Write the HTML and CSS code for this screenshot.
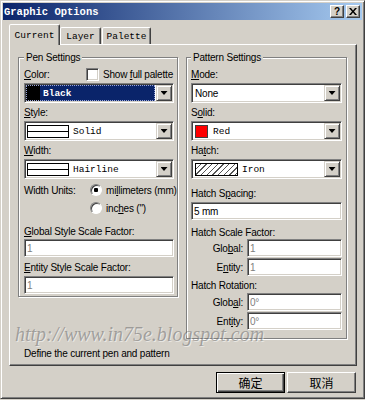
FILE: index.html
```html
<!DOCTYPE html>
<html lang="en">
<head>
  <meta charset="UTF-8">
  <meta name="viewport" content="width=device-width, initial-scale=1.0">
  <title>Graphic Options</title>
  <link rel="stylesheet" href="styles.css">
</head>
<body>
  <div class="window">
    <div class="titlebar">
      <span class="title">Graphic Options</span>
      <span class="cap-btns">
        <span class="cap-btn">?</span>
        <span class="cap-btn">
          <svg width="8" height="7" viewBox="0 0 8 7"><path d="M0 0h2l2 2.5L6 0h2L5 3.5 8 7H6L4 4.5 2 7H0l3-3.5z" fill="#000"/></svg>
        </span>
      </span>
    </div>

    <div class="tabs">
      <div class="tab active">Current</div>
      <div class="tab tab-layer">Layer</div>
      <div class="tab tab-palette">Palette</div>
    </div>

    <div class="panel">
      <div class="groups">
        <!-- Pen Settings -->
        <div class="group pen">
          <div class="group-title">Pen Settings</div>
          <div class="color-row">
            <span class="color-label"><u>C</u>olor:</span>
            <span class="check"></span>
            <span>Show <u>f</u>ull palette</span>
          </div>
          <div class="select first">
            <div class="value hl"><span class="swatch-black"></span><span class="mono bold">Black</span></div>
            <div class="drop"><span class="arrow"></span></div>
          </div>
          <div class="lbl"><u>S</u>tyle:</div>
          <div class="select">
            <div class="value"><span class="line-box"></span><span class="mono">Solid</span></div>
            <div class="drop"><span class="arrow"></span></div>
          </div>
          <div class="lbl"><u>W</u>idth:</div>
          <div class="select">
            <div class="value"><span class="line-box"></span><span class="mono">Hairline</span></div>
            <div class="drop"><span class="arrow"></span></div>
          </div>
          <div class="units">
            <span>Width Units:</span>
            <span class="radio on"></span>
            <span>mi<u>l</u>limeters (mm)</span>
            <span></span>
            <span class="radio"></span>
            <span>inc<u>h</u>es (")</span>
          </div>
          <div class="lbl lbl-far"><u>G</u>lobal Style Scale Factor:</div>
          <div class="input dim">1</div>
          <div class="lbl lbl-mid"><u>E</u>ntity Style Scale Factor:</div>
          <div class="input dim">1</div>
        </div>

        <!-- Pattern Settings -->
        <div class="group pattern">
          <div class="group-title">Pattern Settings</div>
          <div class="lbl lbl-first"><u>M</u>ode:</div>
          <div class="select">
            <div class="value"><span class="plain">None</span></div>
            <div class="drop"><span class="arrow"></span></div>
          </div>
          <div class="lbl">S<u>o</u>lid:</div>
          <div class="select">
            <div class="value"><span class="swatch-red"></span><span class="mono">Red</span></div>
            <div class="drop"><span class="arrow"></span></div>
          </div>
          <div class="lbl">Ha<u>t</u>ch:</div>
          <div class="select">
            <div class="value"><span class="hatch-box"></span><span class="mono">Iron</span></div>
            <div class="drop"><span class="arrow"></span></div>
          </div>
          <div class="lbl lbl-far">Hatch S<u>p</u>acing:</div>
          <div class="input">5 mm</div>
          <div class="lbl lbl-scale">Hatch Scale Factor:</div>
          <div class="pair">
            <span class="pair-label">Glo<u>b</u>al:</span>
            <div class="input dim">1</div>
          </div>
          <div class="pair pair-next">
            <span class="pair-label">E<u>n</u>tity:</span>
            <div class="input dim">1</div>
          </div>
          <div class="lbl lbl-rot">Hatch Rotation:</div>
          <div class="pair">
            <span class="pair-label">Glob<u>a</u>l:</span>
            <div class="input dim">0°</div>
          </div>
          <div class="pair pair-next">
            <span class="pair-label">Ent<u>i</u>ty:</span>
            <div class="input dim">0°</div>
          </div>
        </div>
      </div>
      <div class="status">Define the current pen and pattern</div>
    </div>

    <div class="actions">
      <div class="btn default">确定</div>
      <div class="btn">取消</div>
    </div>

    <div class="watermark">http://www.in75e.blogspot.com</div>
  </div>
</body>
</html>
```

FILE: styles.css
```css
body {
  margin: 0;
  font-family: "Liberation Sans", Arial, sans-serif;
  font-size: 10px;
  letter-spacing: -0.2px;
  color: #000;
  background-color: #d4d0c8;
}

/* Window frame */
.window {
  position: relative;
  width: 365px;
  height: 399px;
  box-sizing: border-box;
  padding: 2px;
  display: flex;
  flex-direction: column;
  background-color: #d4d0c8;
  border: 1px solid;
  border-color: #d4d0c8 #404040 #404040 #d4d0c8;
  box-shadow: inset 1px 1px #fff, inset -1px -1px #808080;
}

.titlebar {
  height: 17px;
  flex-shrink: 0;
  display: flex;
  align-items: center;
  justify-content: space-between;
  padding: 0 2px 0 1px;
  background: linear-gradient(to right, #0a246a, #a6caf0);
}

.title {
  color: #fff;
  font: bold 10.5px "Liberation Mono", monospace;
  letter-spacing: 0;
}

.cap-btns {
  display: flex;
  gap: 2px;
}

.cap-btn {
  width: 14px;
  height: 13px;
  box-sizing: border-box;
  display: flex;
  align-items: center;
  justify-content: center;
  background-color: #d4d0c8;
  border: 1px solid;
  border-color: #fff #404040 #404040 #fff;
  box-shadow: inset -1px -1px #808080;
  font: bold 10px "Liberation Sans", sans-serif;
}

/* Tabs */
.tabs {
  display: flex;
  align-items: flex-end;
  height: 20px;
  margin-top: 4px;
  padding-left: 6px;
}

.tab {
  position: relative;
  height: 17px;
  box-sizing: border-box;
  display: flex;
  align-items: center;
  justify-content: center;
  background-color: #d4d0c8;
  border: 1px solid;
  border-bottom: none;
  border-color: #fff #404040 transparent #fff;
  border-radius: 2px 2px 0 0;
  box-shadow: inset -1px 0 #808080;
  font: 9.5px "Liberation Mono", monospace;
  letter-spacing: 0;
}

.tab.active {
  width: 51px;
  height: 21px;
  margin-bottom: -1px;
  z-index: 1;
}

.tab-layer {
  width: 41px;
}

.tab-palette {
  width: 49px;
  margin-left: 1px;
}

.panel {
  height: 322px;
  flex-shrink: 0;
  box-sizing: border-box;
  margin: 0 5px 0 6px;
  padding: 12px 0 0 8px;
  border: 1px solid;
  border-color: #fff #404040 #404040 #fff;
  box-shadow: inset -1px -1px #808080;
}

.groups {
  display: grid;
  grid-template-columns: 160px 161px;
  column-gap: 8px;
  align-items: start;
}

/* Etched group box */
.group {
  display: flex;
  flex-direction: column;
  border: 1px solid #808080;
  box-shadow: inset 1px 1px #fff, 1px 1px #fff;
}

.group.pen {
  padding: 0 3px 2px 5px;
}

.group.pattern {
  padding: 0 4px 8px 4px;
}

.group-title {
  align-self: flex-start;
  margin-top: -7px;
  padding: 0 2px;
  line-height: 13px;
  background-color: #d4d0c8;
}

.color-row {
  display: flex;
  align-items: center;
  height: 14px;
  margin-top: 3px;
  white-space: nowrap;
}

.color-label {
  width: 62px;
  flex-shrink: 0;
}

.check {
  width: 13px;
  height: 13px;
  flex-shrink: 0;
  box-sizing: border-box;
  margin-right: 4px;
  background-color: #fff;
  border: 1px solid;
  border-color: #808080 #fff #fff #808080;
  box-shadow: inset 1px 1px #404040, inset -1px -1px #d4d0c8;
}

.lbl {
  line-height: 13px;
  margin: 3px 0 2px;
}

.lbl-first {
  margin-top: 4px;
}

.lbl-far {
  margin: 8px 0 1px;
}

.pattern .lbl-far {
  margin-bottom: 2px;
}

.lbl-mid {
  margin: 4px 0 2px;
}

.lbl-scale {
  margin: 6px 0 0;
}

.lbl-rot {
  margin: 3px 0 1px;
}

/* Combo boxes */
.select {
  height: 20px;
  box-sizing: border-box;
  display: flex;
  background-color: #fff;
  border: 1px solid;
  border-color: #808080 #fff #fff #808080;
  box-shadow: inset 1px 1px #404040, inset -1px -1px #d4d0c8;
  padding: 1px;
}

.select.first {
  margin-top: 2px;
}

.value {
  flex: 1;
  display: flex;
  align-items: center;
  padding-left: 1px;
  overflow: hidden;
  white-space: nowrap;
}

.value.hl {
  margin: 0 1px 0 0;
  padding-left: 0;
  background-color: #0a246a;
  color: #fff;
  outline: 1px dotted #9aa6d8;
  outline-offset: -1px;
}

.drop {
  width: 16px;
  height: 16px;
  box-sizing: border-box;
  display: flex;
  align-items: center;
  justify-content: center;
  background-color: #d4d0c8;
  border: 1px solid;
  border-color: #d4d0c8 #404040 #404040 #d4d0c8;
  box-shadow: inset 1px 1px #fff, inset -1px -1px #808080;
}

.arrow {
  width: 7px;
  height: 4px;
  background-color: #000;
  clip-path: polygon(0 0, 100% 0, 50% 100%);
}

.mono {
  font: 9.5px "Liberation Mono", monospace;
  letter-spacing: 0;
}

.bold {
  font-weight: bold;
}

.plain {
  padding-left: 1px;
}

.swatch-black {
  width: 14px;
  height: 100%;
  margin-right: 3px;
  background-color: #000;
}

.line-box {
  width: 42px;
  height: 13px;
  box-sizing: border-box;
  margin-right: 4px;
  border: 1px solid #000;
  background: linear-gradient(#000, #000) center / 100% 1px no-repeat #fff;
}

.swatch-red {
  width: 13px;
  height: 13px;
  box-sizing: border-box;
  margin: 0 5px 0 1px;
  border: 1px solid #404040;
  background-color: #f00;
}

.hatch-box {
  width: 43px;
  height: 13px;
  box-sizing: border-box;
  margin: 0 4px 0 1px;
  border: 1px solid #000;
  background: repeating-linear-gradient(135deg, #fff 0 3px, #555 3px 4px);
}

/* Radio buttons */
.units {
  display: grid;
  grid-template-columns: 62px 12px auto;
  grid-auto-rows: 18px;
  column-gap: 4px;
  align-items: center;
  margin-top: 2px;
  white-space: nowrap;
}

.radio {
  width: 12px;
  height: 12px;
  box-sizing: border-box;
  border-radius: 50%;
  background-color: #fff;
  border: 1px solid;
  border-color: #808080 #fff #fff #808080;
  box-shadow: inset 1px 1px #404040;
}

.radio.on {
  background: radial-gradient(circle, #000 0 2px, #fff 2.5px);
}

/* Edit boxes */
.input {
  height: 18px;
  box-sizing: border-box;
  display: flex;
  align-items: center;
  padding-left: 2px;
  background-color: #fff;
  border: 1px solid;
  border-color: #808080 #fff #fff #808080;
  box-shadow: inset 1px 1px #404040, inset -1px -1px #d4d0c8;
}

.input.dim {
  color: #808080;
}

.pair {
  display: grid;
  grid-template-columns: 56px 1fr;
  align-items: center;
}

.pair-next {
  margin-top: 1px;
}

.pair-label {
  text-align: right;
  padding-right: 4px;
}

.status {
  margin: 8px 0 0 6px;
  line-height: 13px;
}

/* Dialog buttons */
.actions {
  display: flex;
  justify-content: flex-end;
  gap: 2px;
  margin: 6px 6px 0 0;
}

.btn {
  width: 69px;
  height: 21px;
  box-sizing: border-box;
  display: flex;
  align-items: center;
  justify-content: center;
  font: 12px "Noto Sans CJK SC", sans-serif;
  letter-spacing: 0;
  border: 1px solid;
  border-color: #fff #404040 #404040 #fff;
  box-shadow: inset -1px -1px #808080;
}

.btn.default {
  border-color: #000;
  box-shadow: inset 1px 1px #fff, inset -1px -1px #404040, inset -2px -2px #808080;
}

.watermark {
  position: absolute;
  left: 14px;
  top: 322px;
  font: italic 20px "Liberation Serif", serif;
  letter-spacing: 0;
  color: rgba(110, 110, 110, 0.55);
  text-shadow: 1px 1px 0 rgba(255, 255, 255, 0.5);
  pointer-events: none;
}
```
